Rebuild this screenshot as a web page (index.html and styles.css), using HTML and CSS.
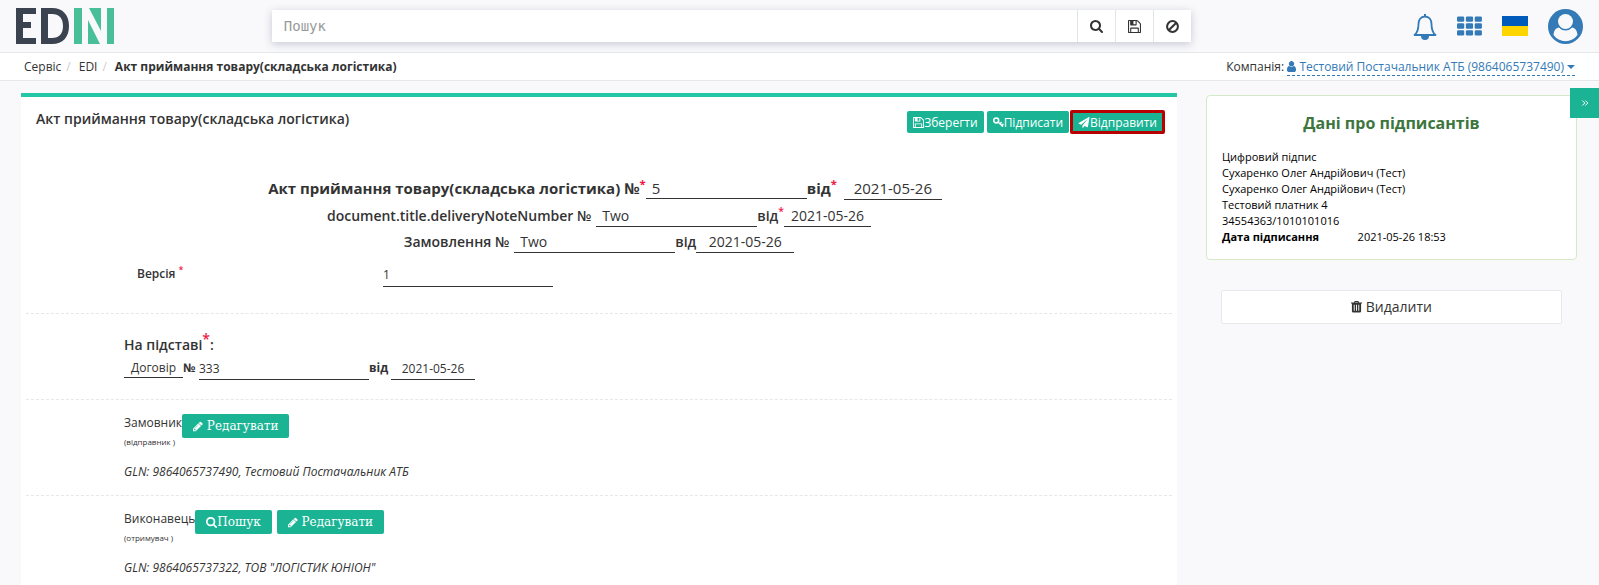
FILE: index.html
```html
<!DOCTYPE html>
<html lang="uk">
<head>
<meta charset="utf-8">
<title>Акт приймання товару(складська логістика)</title>
<link rel="stylesheet" href="styles.css">
</head>
<body>
<svg class="defs" aria-hidden="true">
  <symbol id="search" viewBox="64 128 1664 1664"><path d="M1216 832q0-185-131.500-316.500t-316.500-131.500-316.500 131.500-131.500 316.500 131.500 316.500 316.500 131.500 316.500-131.500 131.500-316.500zm512 832q0 52-38 90t-90 38q-54 0-90-38l-343-342q-179 124-399 124-143 0-273.500-55.500t-225-150-150-225-55.500-273.500 55.500-273.500 150-225 225-150 273.500-55.500 273.500 55.500 225 150 150 225 55.500 273.500q0 220-124 399l343 343q37 37 37 90z"/></symbol>
  <symbol id="save" viewBox="128 128 1536 1536"><path d="M512 1536h768v-384h-768v384zm896 0h128v-896q0-14-10-38.500t-20-34.500l-281-281q-10-10-34-20t-39-10v416q0 40-28 68t-68 28h-576q-40 0-68-28t-28-68v-416h-128v1280h128v-416q0-40 28-68t68-28h832q40 0 68 28t28 68v416zm-384-928v-320q0-13-9.500-22.500t-22.500-9.500h-192q-13 0-22.500 9.500t-9.500 22.500v320q0 13 9.500 22.500t22.500 9.500h192q13 0 22.500-9.500t9.500-22.500zm640 32v928q0 40-28 68t-68 28h-1344q-40 0-68-28t-28-68v-1344q0-40 28-68t68-28h928q40 0 88 20t76 48l280 280q28 28 48 76t20 88z"/></symbol>
  <symbol id="ban" viewBox="1 1 12 12"><g fill="none" stroke="currentColor" stroke-width="1.900"><circle cx="7" cy="7" r="5"/><path d="M3.500 10.500l7-7"/></g></symbol>
  <symbol id="pencil" viewBox="128 128 1556 1556"><path d="M491 1536l91-91-235-235-91 91v107h128v128h107zm523-928q0-22-22-22-10 0-17 7l-542 542q-7 7-7 17 0 22 22 22 10 0 17-7l542-542q7-7 7-17zm-54-192l416 416-832 832h-416v-416zm683 96q0 53-37 90l-166 166-416-416 166-165q36-38 90-38 53 0 91 38l235 234q37 39 37 91z"/></symbol>
  <symbol id="plane" viewBox="0 0 1792 1792"><path d="M1764 11q33 24 27 64l-256 1536q-5 29-32 45-14 8-31 8-11 0-24-5l-453-185-242 295q-18 23-49 23-13 0-22-4-19-7-30.500-23.500t-11.500-36.500v-349l864-1059-1069 925-395-162q-37-14-40-55-2-40 32-59l1664-960q15-9 32-9 20 0 36 11z"/></symbol>
  <symbol id="user" viewBox="256 128 1280 1536"><path d="M1536 1399q0 109-62.500 187t-150.500 78h-854q-88 0-150.500-78t-62.500-187q0-85 8.500-160.500t31.500-152 58.500-131 94-89 134.500-34.500q131 128 313 128t313-128q76 0 134.500 34.500t94 89 58.500 131 31.500 152 8.500 160.500zm-256-887q0 159-112.500 271.500t-271.500 112.500-271.500-112.500-112.500-271.500 112.500-271.500 271.500-112.500 271.500 112.500 112.500 271.500z"/></symbol>
  <symbol id="key" viewBox="1 1 13 13"><g fill="none" stroke="currentColor" stroke-linecap="round"><circle cx="4.800" cy="5" r="2.900" stroke-width="1.900"/><path d="M7 7l5.300 5M9.300 9.200l1.400-1.600M11.500 11.200l1.400-1.600" stroke-width="1.700"/></g></symbol>
  <symbol id="trash" viewBox="1 1 12 13"><path fill-rule="evenodd" d="M1 2.500h3.300L5 1h4l.7 1.500H13v1.200h-1V12q0 1.500-1.500 1.500h-7Q2 13.500 2 12V3.700H1zM5.500 2.500h3L8.200 2H5.800zM4 5v6.500h1V5zm2.500 0v6.500h1V5zM9 5v6.500h1V5z"/></symbol>
</svg>

<header class="topbar">
  <a class="logo" href="#" aria-label="EDIN">
    <svg width="98" height="36" viewBox="0 0 98 36">
      <path fill="#3a434f" d="M0 0h20v6H7v8h8v6H7v10h13v6H0zM25 0h11c11 0 17 7 17 18s-6 18-17 18H25zm7 6v24h4c7 0 11-4 11-12S43 6 36 6z"/>
      <path fill="#49bf97" d="M58 0h8v36h-8zM72 12l12 24H72zM73 0h12v23zM91 0h7v36h-7z"/>
    </svg>
  </a>
  <form class="search">
    <input type="text" placeholder="Пошук" aria-label="Пошук">
    <button type="button" aria-label="Шукати"><svg class="icon"><use href="#search"/></svg></button>
    <button type="button" aria-label="Зберегти пошук"><svg class="icon"><use href="#save"/></svg></button>
    <button type="button" aria-label="Очистити"><svg class="icon"><use href="#ban"/></svg></button>
  </form>
  <nav class="tools">
    <a href="#" aria-label="Сповіщення"><svg width="24" height="28" viewBox="0 0 24 28"><path fill="none" stroke="currentColor" stroke-width="1.800" stroke-linejoin="round" d="M12 4.500c-4.500 0-6.500 3.500-6.500 7.500 0 6-1.500 9-4 11h21c-2.500-2-4-5-4-11 0-4-2-7.500-6.500-7.500z"/><path fill="currentColor" d="M11 2h2v3h-2zM8 24h8a4 4 0 0 1-8 0z"/></svg></a>
    <a href="#" aria-label="Сервіси"><svg width="25" height="20" viewBox="0 0 26 20" fill="currentColor"><rect width="7.500" height="5.600" rx="1.300"/><rect x="9.200" width="7.500" height="5.600" rx="1.300"/><rect x="18.400" width="7.500" height="5.600" rx="1.300"/><rect y="7.200" width="7.500" height="5.600" rx="1.300"/><rect x="9.200" y="7.200" width="7.500" height="5.600" rx="1.300"/><rect x="18.400" y="7.200" width="7.500" height="5.600" rx="1.300"/><rect y="14.400" width="7.500" height="5.600" rx="1.300"/><rect x="9.200" y="14.400" width="7.500" height="5.600" rx="1.300"/><rect x="18.400" y="14.400" width="7.500" height="5.600" rx="1.300"/></svg></a>
    <a href="#" aria-label="Українська"><svg width="26" height="20" viewBox="0 0 26 20"><path fill="#005bbb" d="M0 0h26v10H0z"/><path fill="#ffd500" d="M0 10h26v10H0z"/></svg></a>
    <a href="#" aria-label="Профіль"><svg width="35" height="35" viewBox="0 0 35 35"><circle cx="17.500" cy="17.500" r="17.500" fill="currentColor"/><path fill="#f9f9fb" d="M5.500 26c.5-5 2.500-7 5.500-7.500a8.500 8.500 0 0 0 13 0c3 .5 5 2.500 5.500 7.500a14.800 14.800 0 0 1-24 0z"/><circle cx="17.500" cy="12.500" r="8.600" fill="currentColor"/><circle cx="17.500" cy="12.500" r="7.500" fill="#f9f9fb"/></svg></a>
  </nav>
</header>

<div class="crumbbar">
  <nav class="crumbs"><a href="#">Сервіс</a><i>/</i><a href="#">EDI</a><i>/</i><strong>Акт приймання товару(складська логістика)</strong></nav>
  <div class="company">Компанія: <a href="#"><svg class="icon"><use href="#user"/></svg> Тестовий Постачальник АТБ (9864065737490)<span class="caret"></span></a></div>
</div>

<div class="page">
  <main class="document">
    <div class="titlebar">
      <h1>Акт приймання товару(складська логістика)</h1>
      <div class="actions">
        <button class="action" type="button"><svg class="icon"><use href="#save"/></svg>Зберегти</button>
        <button class="action" type="button"><svg class="icon"><use href="#key"/></svg>Підписати</button>
        <button class="action marked" type="button"><svg class="icon"><use href="#plane"/></svg>Відправити</button>
      </div>
    </div>
    <form>
      <section class="numbers">
        <div class="line main">
          <label for="n1">Акт приймання товару(складська логістика) №<sup>*</sup></label><input class="number" id="n1" value="5">
          <label for="d1">від<sup>*</sup></label><input class="date spaced" id="d1" value="2021-05-26">
        </div>
        <div class="line">
          <label class="before" for="n2">document.title.deliveryNoteNumber №</label><input class="number" id="n2" value="Two">
          <label for="d2">від<sup>*</sup></label><input class="date narrow" id="d2" value="2021-05-26">
        </div>
        <div class="line">
          <label class="before" for="n3">Замовлення №</label><input class="number" id="n3" value="Two">
          <label for="d3">від</label><input class="date" id="d3" value="2021-05-26">
        </div>
        <div class="version"><label for="v">Версія <sup>*</sup></label><input id="v" value="1"></div>
      </section>
      <section class="basis">
        <h2>На підставі<sup>*</sup>:</h2>
        <div class="basis-line">
          <button class="kind" type="button">Договір</button><label class="no" for="n4">№</label><input id="n4" value="333"><label class="from" for="d4">від</label><input class="basis-date" id="d4" value="2021-05-26">
        </div>
      </section>
      <section class="party">
        <div class="who"><div class="role">Замовник<small>(відправник )</small></div><div class="buttons"><button class="edit" type="button"><svg class="icon"><use href="#pencil"/></svg> Редагувати</button></div></div>
        <p>GLN: 9864065737490, Тестовий Постачальник АТБ</p>
      </section>
      <section class="party">
        <div class="who"><div class="role">Виконавець<small>(отримувач )</small></div><div class="buttons"><button class="edit find" type="button"><svg class="icon"><use href="#search"/></svg>Пошук</button><button class="edit" type="button"><svg class="icon"><use href="#pencil"/></svg> Редагувати</button></div></div>
        <p>GLN: 9864065737322, ТОВ "ЛОГІСТИК ЮНІОН"</p>
      </section>
    </form>
  </main>
  <aside>
    <div class="signers">
      <h2>Дані про підписантів</h2>
      <div>Цифровий підпис</div>
      <div>Сухаренко Олег Андрійович (Тест)</div>
      <div>Сухаренко Олег Андрійович (Тест)</div>
      <div>Тестовий платник 4</div>
      <div>34554363/1010101016</div>
      <div class="signed"><b>Дата підписання</b><span>2021-05-26 18:53</span></div>
    </div>
    <button class="delete" type="button"><svg class="icon"><use href="#trash"/></svg> Видалити</button>
  </aside>
  <button class="toggle" type="button" aria-label="Згорнути панель"><svg width="8" height="8" viewBox="0 0 8 8"><path d="M1.300 1.500l2.500 2.500-2.500 2.500M4.300 1.500l2.500 2.500-2.500 2.500" fill="none" stroke="currentColor"/></svg></button>
</div>
</body>
</html>
```

FILE: styles.css
```css
* { box-sizing: border-box; }
body {
  margin: 0;
  min-height: 100vh;
  display: flex;
  flex-direction: column;
  background: #f9f9fb;
  color: #333;
  font: 12px/18px "Open Sans", "Noto Sans", sans-serif;
}
a { color: inherit; text-decoration: none; }
button, input { font: inherit; color: inherit; border: 0; margin: 0; padding: 0; background: none; border-radius: 0; }
button { cursor: pointer; }
h1, h2, p { margin: 0; }
sup { color: #ed1846; font-size: 75%; line-height: 0; vertical-align: super; }
.defs { position: absolute; width: 0; height: 0; }
.icon { width: 11px; height: 11px; fill: currentColor; flex: none; }

.topbar {
  display: grid;
  grid-template-columns: 17fr 58fr 25fr;
  align-items: center;
  height: 53px;
  border-bottom: 1px solid #e4e8ec;
}
.logo { padding-left: 16px; }
.logo svg { display: block; }
.search {
  display: flex;
  gap: 1px;
  height: 32px;
  margin-right: 8px;
  background: #e3e4e8;
  box-shadow: 0 2px 8px rgba(50, 60, 100, .25);
}
.search input {
  flex: 1;
  padding: 0 12px;
  background: #fff;
  font: 14px "DejaVu Sans Mono", monospace;
}
.search input::placeholder { color: #999; opacity: 1; }
.search button { width: 37px; background: #fff; display: grid; place-items: center; }
.search .icon { width: 13px; height: 13px; }
.tools { display: flex; align-items: center; justify-content: flex-end; gap: 20px; padding-right: 16px; color: #337ab7; }
.tools svg { display: block; }

.crumbbar {
  display: flex;
  justify-content: space-between;
  align-items: center;
  height: 28px;
  padding: 0 24px;
  background: #fff;
  border-bottom: 1px solid #e4e8ec;
}
.crumbs i { color: #ccc; font-style: normal; padding: 0 8px 0 5px; }
.company { padding-top: 1px; }
.company a { display: inline-block; color: #337ab7; line-height: 17px; border-bottom: 1px dashed #337ab7; }
.company .icon { width: 9px; vertical-align: -1px; }
.caret { display: inline-block; margin-left: 3px; vertical-align: 2px; border: 4px solid transparent; border-top-color: currentColor; border-bottom: 0; }

.page {
  position: relative;
  flex: 1;
  display: grid;
  grid-template-columns: 1156fr 371fr;
  gap: 29px;
  padding: 12px 22px 0 21px;
}
.document { background: #fff; border-top: 4px solid #23c6a5; }
.titlebar { display: flex; justify-content: space-between; align-items: flex-start; padding: 13px 12px 0 15px; }
.titlebar h1 { font-size: 14px; font-weight: 600; line-height: 18px; }
.actions { display: flex; align-items: center; gap: 3px; }
.action {
  display: flex;
  align-items: center;
  height: 22px;
  padding: 1px 6px 0;
  background: #1ab394;
  color: #fff;
  border-radius: 2px;
}
.action .icon { width: 11px; }
.action.marked { height: 24px; margin-left: -2px; padding: 1px 5px 0; border: 3px solid #b80000; }
.action.marked .icon { width: 12px; }

section { margin: 0 5px; padding: 0 98px; border-bottom: 1px dashed #e7e7e7; }
section:last-child { border-bottom: 0; }
section input, .kind { border-bottom: 1px solid #333; height: 22px; }
section.numbers { padding: 39px 0 26px; }
.line { display: flex; align-items: center; justify-content: center; height: 26px; font-size: 14px; line-height: 20px; }
.line label { font-weight: 600; }
.line .before { padding-right: 5px; }
.line.main { height: 30px; padding-left: 12px; font-size: 15px; }
.line.main label { font-weight: 700; }
.number { width: 161px; padding: 0 6px; }
.date { width: 98px; text-align: center; }
.date.narrow { width: 87px; }
.line.main .spaced { margin-left: 7px; height: 24px; }
.version { display: grid; grid-template-columns: 246px 170px; padding: 6px 0 0 111px; }
.version label { font-weight: 600; line-height: 26px; }
.version input { height: 26px; padding-top: 2px; }
section.basis { padding-top: 21px; padding-bottom: 19px; }
.basis h2 { font-size: 14px; font-weight: 600; line-height: 20px; padding-bottom: 1px; }
.basis sup { font-size: 14px; }
.basis-line { display: flex; align-items: flex-start; line-height: 24px; font-weight: 700; }
.basis-line input { width: 170px; height: 24px; padding-top: 2px; font-weight: 400; }
.basis-line .kind { height: 22px; width: 59px; font-weight: 400; }
.basis-line .no { width: 16px; }
.basis-line .from { width: 22px; }
.basis-line .basis-date { width: 84px; text-align: center; }
section.party { padding-top: 14px; padding-bottom: 14px; }
.who { display: flex; align-items: flex-start; }
.role { width: min-content; white-space: nowrap; }
.role small { display: block; font-size: 8px; line-height: 20px; }
.buttons { display: flex; gap: 5px; }
.edit {
  height: 24px;
  padding: 0 11px;
  border-radius: 2px;
  background: #1ab394;
  color: #fff;
  font: 12px "DejaVu Serif", serif;
}
.edit .icon { width: 10px; vertical-align: -2px; }
.edit.find .icon { width: 11px; }
.party p { padding-top: 11px; font-style: italic; line-height: 18px; }

.signers {
  margin-top: 2px;
  padding: 16px 15px 14px;
  background: #fff;
  border: 1px solid #d6e9c6;
  border-radius: 4px;
  color: #000;
  font-size: 11px;
  line-height: 16px;
}
.signers h2 { color: #3c763d; font-size: 16px; line-height: 22px; text-align: center; padding-bottom: 15px; }
.signed { display: grid; grid-template-columns: 40% 1fr; }
.delete {
  display: block;
  width: calc(100% - 30px);
  height: 34px;
  margin: 30px 15px 0;
  background: #fff;
  border: 1px solid #e7eaec;
  border-radius: 2px;
  font-size: 14px;
}
.delete .icon { height: 12px; vertical-align: -1px; }
.toggle { position: absolute; top: 7px; right: 0; width: 29px; height: 30px; background: #1ab394; color: #fff; display: grid; place-items: center; }
```
